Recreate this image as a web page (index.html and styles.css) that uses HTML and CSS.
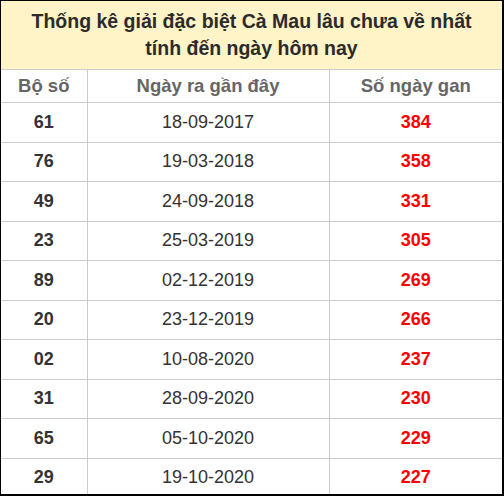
FILE: index.html
```html
<!DOCTYPE html>
<html lang="vi">
<head>
<meta charset="utf-8">
<title>Thống kê giải đặc biệt Cà Mau</title>
<link rel="stylesheet" href="styles.css">
</head>
<body>
<div class="frame">
<table class="gan">
  <colgroup><col class="c1"><col class="c2"><col class="c3"></colgroup>
  <thead>
    <tr><th colspan="3" class="title">Thống kê giải đặc biệt Cà Mau lâu chưa về nhất<br>tính đến ngày hôm nay</th></tr>
    <tr class="head"><th>Bộ số</th><th>Ngày ra gần đây</th><th>Số ngày gan</th></tr>
  </thead>
  <tbody>
    <tr><td class="num">61</td><td class="date">18-09-2017</td><td class="days">384</td></tr>
    <tr><td class="num">76</td><td class="date">19-03-2018</td><td class="days">358</td></tr>
    <tr><td class="num">49</td><td class="date">24-09-2018</td><td class="days">331</td></tr>
    <tr><td class="num">23</td><td class="date">25-03-2019</td><td class="days">305</td></tr>
    <tr><td class="num">89</td><td class="date">02-12-2019</td><td class="days">269</td></tr>
    <tr><td class="num">20</td><td class="date">23-12-2019</td><td class="days">266</td></tr>
    <tr><td class="num">02</td><td class="date">10-08-2020</td><td class="days">237</td></tr>
    <tr><td class="num">31</td><td class="date">28-09-2020</td><td class="days">230</td></tr>
    <tr><td class="num">65</td><td class="date">05-10-2020</td><td class="days">229</td></tr>
    <tr><td class="num">29</td><td class="date">19-10-2020</td><td class="days">227</td></tr>
  </tbody>
</table>
</div>
</body>
</html>
```
FILE: styles.css
```css
html, body {
  margin: 0;
  padding: 0;
  background: #fff;
}
body {
  font-family: "Liberation Sans", Arial, sans-serif;
  color: #333;
}
.frame {
  width: 501px;
  height: 493px;
  border-left: 1px solid #000;
  border-top: 1px solid #000;
  border-right: 2px solid #000;
  border-bottom: 2px solid #000;
  overflow: hidden;
}
.gan {
  width: 501px;
  border-collapse: collapse;
  border-style: hidden;
  table-layout: fixed;
}
.c1 { width: 86px; }
.c2 { width: 242px; }
.c3 { width: 173px; }
.gan th, .gan td {
  border: 1px solid #ccc;
  text-align: center;
  padding: 0;
}
.title {
  background: #fff3c8;
  height: 68px;
  font-size: 19.5px;
  font-weight: bold;
  line-height: 27px;
  color: #2b2b2b;
}
.head th {
  height: 32px;
  font-size: 18.5px;
  font-weight: bold;
  color: #666;
}
.gan td {
  height: 38.5px;
  font-size: 18px;
}
.num { font-weight: bold; }
.days {
  color: #f00;
  font-weight: bold;
  font-size: 23px;
}
```
